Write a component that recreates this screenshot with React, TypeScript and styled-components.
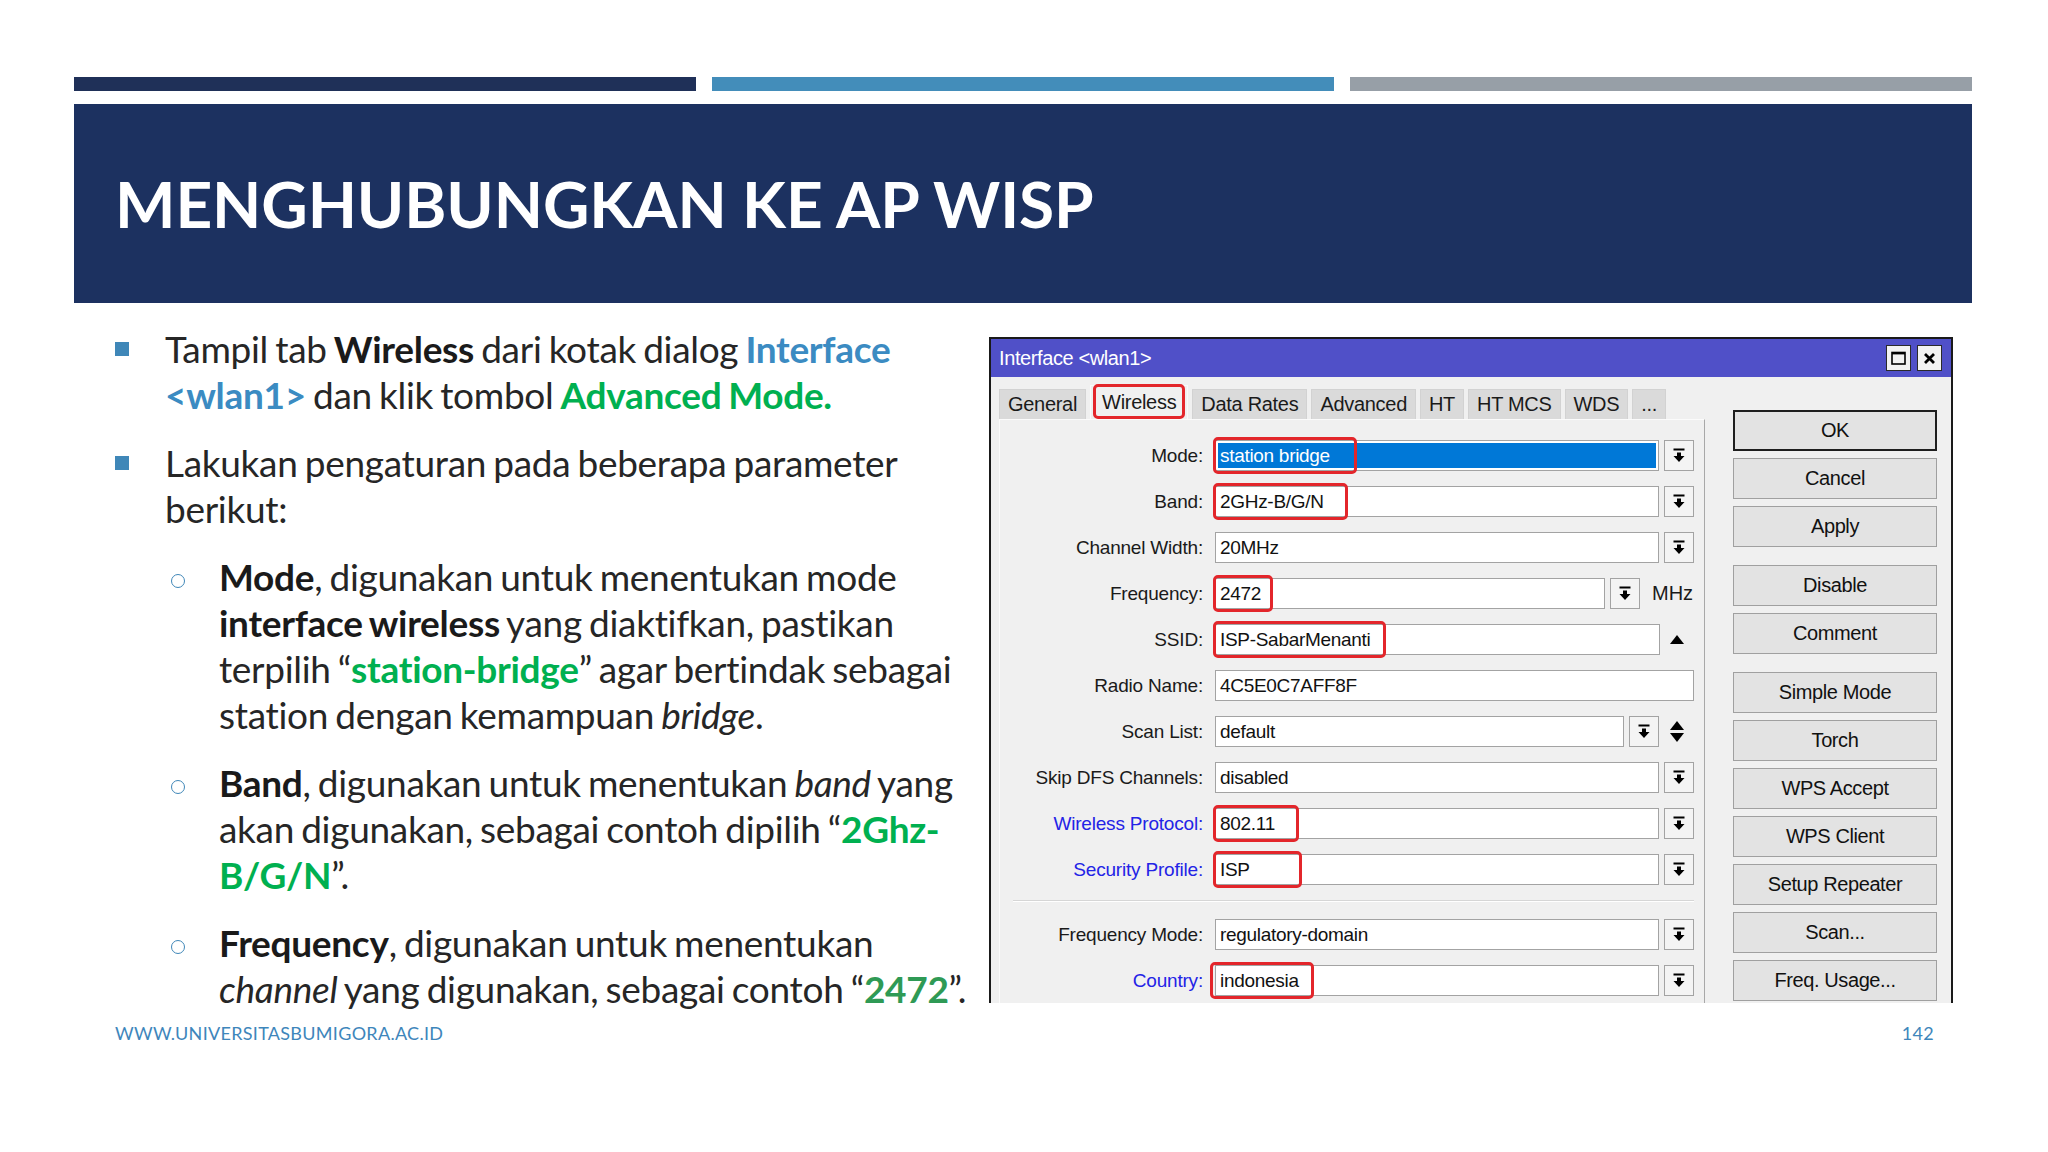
import React from 'react';
import styled, { createGlobalStyle } from 'styled-components';

const GlobalStyle = createGlobalStyle`
  html, body {
    margin: 0;
    padding: 0;
    background: #ffffff;
  }
  body {
    width: 2048px;
    height: 1152px;
    overflow: hidden;
  }
`;

const Slide = styled.div`
  width: 2048px;
  height: 1152px;
  box-sizing: border-box;
  padding: 77px 76px 0 74px;
  display: flex;
  flex-direction: column;
  background: #ffffff;
  font-family: Lato, 'Open Sans', sans-serif;
`;

const BarRow = styled.div`
  display: flex;
  gap: 16px;
  height: 14px;
`;

const Bar = styled.div<{ $color: string }>`
  flex: 1;
  background: ${(p) => p.$color};
`;

const Banner = styled.header`
  margin-top: 13px;
  height: 199px;
  background: #1c3160;
  display: flex;
  align-items: center;
  padding-left: 41px;
`;

const Title = styled.h1`
  margin: 0;
  color: #ffffff;
  font-family: Lato, sans-serif;
  font-weight: 700;
  font-size: 64px;
  letter-spacing: -0.1px;
  line-height: 1;
`;

const Content = styled.div`
  margin-top: 23px;
  display: flex;
  align-items: flex-start;
`;

const TextColumn = styled.div`
  flex: 0 0 915px;
  box-sizing: border-box;
  padding-left: 41px;
  color: #262626;
  font-size: 37px;
  line-height: 46px;
  letter-spacing: -0.3px;
  word-spacing: -2px;
`;

const Item = styled.div`
  display: grid;
  grid-template-columns: 50px 1fr;
  & + & {
    margin-top: 22px;
  }
`;

const SubList = styled.div`
  margin-top: 22px;
`;

const SubItem = styled.div`
  display: grid;
  grid-template-columns: 54px 1fr;
  & + & {
    margin-top: 22px;
  }
`;

const Square = styled.span`
  width: 14px;
  height: 14px;
  margin-top: 16px;
  background: #3f87b8;
`;

const Circle = styled.span`
  width: 12px;
  height: 12px;
  margin: 20px 0 0 6px;
  border: 1.6px solid #3f87b8;
  border-radius: 50%;
`;

const Para = styled.div``;

const Line = styled.span`
  display: block;
  white-space: nowrap;
`;

const B = styled.b`
  font-weight: 700;
  color: #1a1a1a;
`;

const Blue = styled.b`
  font-weight: 700;
  color: #3b8bc2;
`;

const Green = styled.b<{ $dark?: boolean }>`
  font-weight: 700;
  color: ${(p) => (p.$dark ? '#2f9a55' : '#00b050')};
`;

const Footer = styled.footer`
  margin-top: 11px;
  display: flex;
  justify-content: space-between;
  padding: 0 38px 0 41px;
  font-size: 18px;
  line-height: 20px;
  color: #3e86bb;
  letter-spacing: 0.3px;
`;

/* ---------- MikroTik dialog ---------- */

const Dialog = styled.div`
  margin-top: 11px;
  width: 964px;
  height: 666px;
  box-sizing: border-box;
  border: 2px solid #1a1a1a;
  border-bottom: none;
  background: #f0f0f0;
  overflow: hidden;
  display: flex;
  flex-direction: column;
  font-family: 'Liberation Sans', Arial, sans-serif;
  font-size: 19px;
  color: #111;
`;

const TitleBar = styled.div`
  height: 38px;
  flex: 0 0 38px;
  background: #5050c8;
  color: #ffffff;
  display: flex;
  align-items: center;
  justify-content: space-between;
  padding: 0 9px 0 8px;
  font-size: 20px;
  letter-spacing: -0.4px;
`;

const TitleButtons = styled.div`
  display: flex;
  gap: 6px;
`;

const TitleButton = styled.span`
  width: 25px;
  height: 26px;
  box-sizing: border-box;
  border: 1px solid #2a2a2a;
  background: #f2f2f2;
  display: flex;
  align-items: center;
  justify-content: center;
`;

const DialogBody = styled.div`
  display: flex;
  padding: 8px 14px 0 8px;
`;

const LeftPane = styled.div`
  width: 706px;
  display: flex;
  flex-direction: column;
`;

const TabRow = styled.div`
  display: flex;
  align-items: flex-end;
  gap: 4px;
  height: 34px;
`;

const Tab = styled.div<{ $active?: boolean }>`
  position: relative;
  height: ${(p) => (p.$active ? '34px' : '30px')};
  box-sizing: border-box;
  padding: 0 ${(p) => (p.$active ? '11px' : '8px')};
  display: flex;
  align-items: center;
  background: ${(p) => (p.$active ? '#f0f0f0' : '#dadada')};
  border: 1px solid ${(p) => (p.$active ? '#fafafa' : '#d2d2d2')};
  border-bottom: none;
  color: #1a1a1a;
  font-size: 20px;
  letter-spacing: -0.3px;
  white-space: nowrap;
`;

const Highlight = styled.span<{ $w?: number; $left?: number }>`
  position: absolute;
  top: -4px;
  bottom: -4px;
  left: ${(p) => p.$left ?? -3}px;
  ${(p) => (p.$w ? `width: ${p.$w}px;` : 'right: 2px;')}
  box-sizing: border-box;
  border: 3px solid #e3262b;
  border-radius: 5px;
  pointer-events: none;
`;

const TabHighlight = styled(Highlight)`
  top: -2px;
  bottom: 0;
  left: 2px;
  right: 2px;
`;

const Panel = styled.div`
  height: 640px;
  box-sizing: border-box;
  border-top: 1px solid #fbfbfb;
  border-left: 1px solid #fbfbfb;
  border-right: 1px solid #a8a8a8;
  padding: 20px 10px 0 0;
`;

const Row = styled.div`
  display: flex;
  align-items: center;
  height: 31px;
  margin-bottom: 15px;
`;

const Label = styled.div<{ $blue?: boolean }>`
  width: 203px;
  flex: 0 0 203px;
  text-align: right;
  color: ${(p) => (p.$blue ? '#2323e6' : '#1a1a1a')};
  white-space: nowrap;
  letter-spacing: -0.2px;
`;

const Control = styled.div`
  margin-left: 12px;
  width: 480px;
  display: flex;
  align-items: center;
  height: 31px;
`;

const Field = styled.div<{ $selected?: boolean }>`
  position: relative;
  flex: 1;
  height: 31px;
  box-sizing: border-box;
  border: 1px solid #a3a3a3;
  background: ${(p) => (p.$selected ? '#0078d7' : '#ffffff')};
  box-shadow: ${(p) => (p.$selected ? 'inset 0 0 0 2px #ffffff' : 'none')};
  color: ${(p) => (p.$selected ? '#ffffff' : '#111')};
  padding: 0 4px;
  line-height: 29px;
  white-space: nowrap;
  letter-spacing: -0.3px;
`;

const DropButton = styled.div`
  flex: 0 0 30px;
  width: 30px;
  height: 31px;
  margin-left: 5px;
  box-sizing: border-box;
  border: 1px solid #a3a3a3;
  background: #f4f4f4;
  display: flex;
  align-items: center;
  justify-content: center;
`;

const Suffix = styled.div<{ $w: number }>`
  flex: 0 0 ${(p) => p.$w}px;
  display: flex;
  flex-direction: column;
  align-items: center;
  justify-content: center;
  gap: 3px;
`;

const Unit = styled.div`
  flex: 0 0 42px;
  margin-left: 12px;
  color: #1a1a1a;
  font-size: 20px;
`;

const Separator = styled.div`
  height: 1px;
  margin: 3px 0 17px 13px;
  background: #d6d6d6;
  border-bottom: 1px solid #ffffff;
`;

const ButtonColumn = styled.div`
  margin-left: 28px;
  padding-top: 25px;
  width: 204px;
  display: flex;
  flex-direction: column;
  gap: 18px;
`;

const ButtonGroup = styled.div`
  display: flex;
  flex-direction: column;
  gap: 7px;
`;

const WinButton = styled.div<{ $default?: boolean }>`
  height: 41px;
  box-sizing: border-box;
  border: ${(p) => (p.$default ? '2px solid #1e1e1e' : '1px solid #a0a0a0')};
  background: #e3e3e3;
  display: flex;
  align-items: center;
  justify-content: center;
  color: #111;
  font-size: 20px;
  letter-spacing: -0.4px;
`;

const DropIcon = () => (
  <svg width="12" height="15" viewBox="0 0 12 15">
    <rect x="0.5" y="0.5" width="11" height="2" fill="#000" />
    <path d="M4 4.5h4v3.5h3.5L6 14 0.5 8H4z" fill="#000" />
  </svg>
);

const Triangle = ({ down }: { down?: boolean }) => (
  <svg width="14" height="9" viewBox="0 0 14 9">
    <path d={down ? 'M0 0h14L7 9z' : 'M7 0l7 9H0z'} fill="#000" />
  </svg>
);

type FormRow = {
  label: string;
  value: string;
  blue?: boolean;
  selected?: boolean;
  drop?: boolean;
  hl?: number;
  hlLeft?: number;
  unit?: string;
  suffix?: 'up' | 'updown';
};

const rowsTop: FormRow[] = [
  { label: 'Mode', value: 'station bridge', selected: true, drop: true, hl: 144 },
  { label: 'Band', value: '2GHz-B/G/N', drop: true, hl: 135 },
  { label: 'Channel Width', value: '20MHz', drop: true },
  { label: 'Frequency', value: '2472', drop: true, hl: 60, unit: 'MHz' },
  { label: 'SSID', value: 'ISP-SabarMenanti', hl: 173, suffix: 'up' },
  { label: 'Radio Name', value: '4C5E0C7AFF8F' },
  { label: 'Scan List', value: 'default', drop: true, suffix: 'updown' },
  { label: 'Skip DFS Channels', value: 'disabled', drop: true },
  { label: 'Wireless Protocol', value: '802.11', blue: true, drop: true, hl: 86 },
  { label: 'Security Profile', value: 'ISP', blue: true, drop: true, hl: 89 },
];

const rowsBottom: FormRow[] = [
  { label: 'Frequency Mode', value: 'regulatory-domain', drop: true },
  { label: 'Country', value: 'indonesia', blue: true, drop: true, hl: 104, hlLeft: -6 },
];

const tabs = ['General', 'Wireless', 'Data Rates', 'Advanced', 'HT', 'HT MCS', 'WDS', '...'];

const buttonGroups = [
  ['OK', 'Cancel', 'Apply'],
  ['Disable', 'Comment'],
  ['Simple Mode', 'Torch', 'WPS Accept', 'WPS Client', 'Setup Repeater', 'Scan...', 'Freq. Usage...'],
];

const renderRow = (r: FormRow) => (
  <Row key={r.label}>
    <Label $blue={r.blue}>{r.label}:</Label>
    <Control>
      <Field $selected={r.selected}>
        {r.value}
        {r.hl && <Highlight $w={r.hl} $left={r.hlLeft} />}
      </Field>
      {r.drop && (
        <DropButton>
          <DropIcon />
        </DropButton>
      )}
      {r.unit && <Unit>{r.unit}</Unit>}
      {r.suffix === 'up' && (
        <Suffix $w={34}>
          <Triangle />
        </Suffix>
      )}
      {r.suffix === 'updown' && (
        <Suffix $w={35}>
          <Triangle />
          <Triangle down />
        </Suffix>
      )}
    </Control>
  </Row>
);

const InterfaceDialog = () => (
  <Dialog>
    <TitleBar>
      <span>Interface &lt;wlan1&gt;</span>
      <TitleButtons>
        <TitleButton>
          <svg width="15" height="14" viewBox="0 0 15 14">
            <rect x="1" y="1.5" width="13" height="11.5" fill="none" stroke="#000" strokeWidth="1.6" />
            <rect x="1" y="1" width="13" height="2.4" fill="#000" />
          </svg>
        </TitleButton>
        <TitleButton>
          <svg width="13" height="13" viewBox="0 0 13 13">
            <path d="M2 2l9 9M11 2l-9 9" stroke="#000" strokeWidth="2.8" />
          </svg>
        </TitleButton>
      </TitleButtons>
    </TitleBar>
    <DialogBody>
      <LeftPane>
        <TabRow>
          {tabs.map((t) => (
            <Tab key={t} $active={t === 'Wireless'}>
              {t}
              {t === 'Wireless' && <TabHighlight />}
            </Tab>
          ))}
        </TabRow>
        <Panel>
          {rowsTop.map(renderRow)}
          <Separator />
          {rowsBottom.map(renderRow)}
        </Panel>
      </LeftPane>
      <ButtonColumn>
        {buttonGroups.map((g, i) => (
          <ButtonGroup key={i}>
            {g.map((b) => (
              <WinButton key={b} $default={b === 'OK'}>
                {b}
              </WinButton>
            ))}
          </ButtonGroup>
        ))}
      </ButtonColumn>
    </DialogBody>
  </Dialog>
);

export default function App() {
  return (
    <>
      <GlobalStyle />
      <Slide>
        <BarRow>
          <Bar $color="#1f3058" />
          <Bar $color="#438dba" />
          <Bar $color="#979fa7" />
        </BarRow>
        <Banner>
          <Title>MENGHUBUNGKAN KE AP WISP</Title>
        </Banner>
        <Content>
          <TextColumn>
            <Item>
              <Square />
              <Para>
                <Line>
                  Tampil tab <B>Wireless</B> dari kotak dialog <Blue>Interface</Blue>
                </Line>
                <Line>
                  <Blue>&lt;wlan1&gt;</Blue> dan klik tombol <Green>Advanced Mode.</Green>
                </Line>
              </Para>
            </Item>
            <Item>
              <Square />
              <Para>
                <Line>Lakukan pengaturan pada beberapa parameter</Line>
                <Line>berikut:</Line>
                <SubList>
                  <SubItem>
                    <Circle />
                    <Para>
                      <Line>
                        <B>Mode</B>, digunakan untuk menentukan mode
                      </Line>
                      <Line>
                        <B>interface wireless</B> yang diaktifkan, pastikan
                      </Line>
                      <Line>
                        terpilih “<Green>station-bridge</Green>” agar bertindak sebagai
                      </Line>
                      <Line>
                        station dengan kemampuan <i>bridge</i>.
                      </Line>
                    </Para>
                  </SubItem>
                  <SubItem>
                    <Circle />
                    <Para>
                      <Line>
                        <B>Band</B>, digunakan untuk menentukan <i>band</i> yang
                      </Line>
                      <Line>
                        akan digunakan, sebagai contoh dipilih “<Green>2Ghz-</Green>
                      </Line>
                      <Line>
                        <Green>B/G/N</Green>”.
                      </Line>
                    </Para>
                  </SubItem>
                  <SubItem>
                    <Circle />
                    <Para>
                      <Line>
                        <B>Frequency</B>, digunakan untuk menentukan
                      </Line>
                      <Line>
                        <i>channel</i> yang digunakan, sebagai contoh “<Green $dark>2472</Green>”.
                      </Line>
                    </Para>
                  </SubItem>
                </SubList>
              </Para>
            </Item>
          </TextColumn>
          <InterfaceDialog />
        </Content>
        <Footer>
          <span>WWW.UNIVERSITASBUMIGORA.AC.ID</span>
          <span>142</span>
        </Footer>
      </Slide>
    </>
  );
}
